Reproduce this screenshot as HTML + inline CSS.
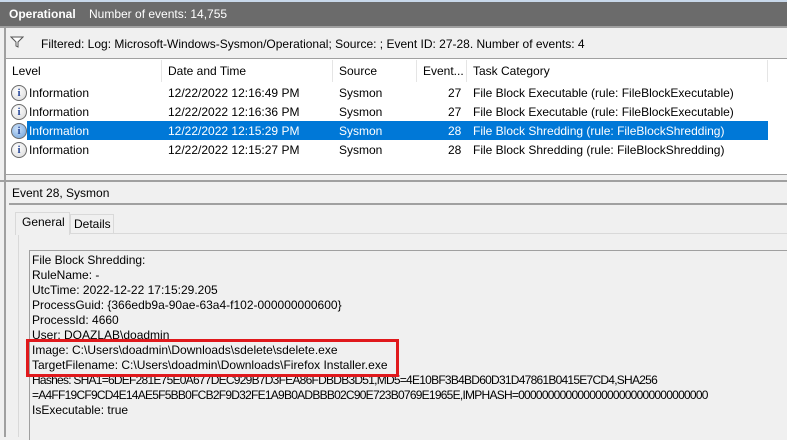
<!DOCTYPE html>
<html><head><style>
*{margin:0;padding:0;box-sizing:border-box}
body{width:787px;height:437px;overflow:hidden;background:#f0f0f0;font-family:"Liberation Sans",sans-serif;font-size:12px;color:#000;position:relative}
.a{position:absolute;white-space:nowrap}
.ic{position:absolute;width:16px;height:16px;border-radius:50%;border:1px solid #6a6a6a;background:radial-gradient(circle at 40% 35%,#fff,#d8d8d8);font:bold 11px "Liberation Serif",serif;color:#2a4a9a;text-align:center;line-height:14px}
.h{letter-spacing:-0.75px}
</style></head><body>
<div class="a" style="left:0;top:0;width:787px;height:2px;background:#c8d8ea"></div>
<div class="a" style="left:0;top:2px;width:787px;height:24px;background:#6b6b6b"></div>
<div class="a" style="left:9px;top:7px;color:#fff;font-weight:bold">Operational</div>
<div class="a" style="left:89px;top:7px;color:#fff">Number of events: 14,755</div>
<div class="a" style="left:0;top:26px;width:787px;height:2px;background:#a0a0a0"></div>
<div class="a" style="left:4px;top:28px;width:2px;height:409px;background:#a0a0a0"></div>
<svg class="a" style="left:10px;top:36px" width="14" height="12"><path d="M1 1H13L8 6V11L6 10V6Z" fill="#fff" stroke="#555"/></svg>
<div class="a" style="left:41px;top:37px">Filtered: Log: Microsoft-Windows-Sysmon/Operational; Source: ; Event ID: 27-28. Number of events: 4</div>
<div class="a" style="left:6px;top:58px;width:781px;height:117px;background:#fff;border-top:1px solid #a0a0a0;border-bottom:1px solid #a0a0a0"></div>
<div class="a" style="left:161px;top:60px;width:1px;height:22px;background:#e5e5e5"></div>
<div class="a" style="left:332px;top:60px;width:1px;height:22px;background:#e5e5e5"></div>
<div class="a" style="left:416px;top:60px;width:1px;height:22px;background:#e5e5e5"></div>
<div class="a" style="left:466px;top:60px;width:1px;height:22px;background:#e5e5e5"></div>
<div class="a" style="left:767px;top:60px;width:1px;height:22px;background:#e5e5e5"></div>
<div class="a" style="left:12px;top:64px">Level</div>
<div class="a" style="left:168px;top:64px">Date and Time</div>
<div class="a" style="left:339px;top:64px">Source</div>
<div class="a" style="left:423px;top:64px">Event...</div>
<div class="a" style="left:473px;top:64px">Task Category</div>
<div class="a" style="left:27px;top:121px;width:741px;height:19px;background:#0078d7"></div>
<div class="ic" style="left:11px;top:85px">i</div>
<div class="ic" style="left:11px;top:104px">i</div>
<div class="ic" style="left:11px;top:123px;background:radial-gradient(circle at 40% 35%,#cfe3fb,#6a9fd8)">i</div>
<div class="ic" style="left:11px;top:142px">i</div>
<div class="a" style="left:29px;top:86px">Information</div><div class="a" style="left:168px;top:86px">12/22/2022 12:16:49 PM</div><div class="a" style="left:339px;top:86px">Sysmon</div><div class="a" style="left:448px;top:86px">27</div><div class="a" style="left:473px;top:86px">File Block Executable (rule: FileBlockExecutable)</div>
<div class="a" style="left:29px;top:105px">Information</div><div class="a" style="left:168px;top:105px">12/22/2022 12:16:36 PM</div><div class="a" style="left:339px;top:105px">Sysmon</div><div class="a" style="left:448px;top:105px">27</div><div class="a" style="left:473px;top:105px">File Block Executable (rule: FileBlockExecutable)</div>
<div style="color:#fff"><div class="a" style="left:29px;top:124px">Information</div><div class="a" style="left:168px;top:124px">12/22/2022 12:15:29 PM</div><div class="a" style="left:339px;top:124px">Sysmon</div><div class="a" style="left:448px;top:124px">28</div><div class="a" style="left:473px;top:124px">File Block Shredding (rule: FileBlockShredding)</div></div>
<div class="a" style="left:29px;top:143px">Information</div><div class="a" style="left:168px;top:143px">12/22/2022 12:15:27 PM</div><div class="a" style="left:339px;top:143px">Sysmon</div><div class="a" style="left:448px;top:143px">28</div><div class="a" style="left:473px;top:143px">File Block Shredding (rule: FileBlockShredding)</div>
<div class="a" style="left:0;top:180px;width:787px;height:2px;background:#a0a0a0"></div>
<div class="a" style="left:12px;top:186px">Event 28, Sysmon</div>
<div class="a" style="left:9px;top:203px;width:778px;height:2px;background:#a0a0a0"></div>
<div class="a" style="left:18px;top:233px;width:769px;height:204px;background:#f0f0f0;border-top:1px solid #d9d9d9;border-left:1px solid #d9d9d9"></div>
<div class="a" style="left:15px;top:212px;width:55px;height:23px;background:#f0f0f0;border:1px solid #d9d9d9;border-bottom:none"></div>
<div class="a" style="left:22px;top:215px">General</div>
<div class="a" style="left:70px;top:214px;width:44px;height:19px;border:1px solid #d9d9d9;border-bottom:none"></div>
<div class="a" style="left:74px;top:217px">Details</div>
<div class="a" style="left:29px;top:250px;width:760px;height:190px;border-top:1px solid #a0a0a0;border-left:1px solid #a0a0a0"></div>
<div class="a" style="left:32px;top:253px;line-height:15px">File Block Shredding:<br>RuleName: -<br>UtcTime: 2022-12-22 17:15:29.205<br>ProcessGuid: {366edb9a-90ae-63a4-f102-000000000600}<br>ProcessId: 4660<br>User: DOAZLAB\doadmin<br>Image: C:\Users\doadmin\Downloads\sdelete\sdelete.exe<br>TargetFilename: C:\Users\doadmin\Downloads\Firefox Installer.exe<br><span class="h">Hashes: SHA1=6DEF281E75E0A677DEC929B7D3FEA86FDBDB3D51,MD5=4E10BF3B4BD60D31D47861B0415E7CD4,SHA256</span><br><span class="h">=A4FF19CF9CD4E14AE5F5BB0FCB2F9D32FE1A9B0ADBBB02C90E723B0769E1965E,IMPHASH=00000000000000000000000000000000</span><br>IsExecutable: true</div>
<div class="a" style="left:26px;top:339px;width:373px;height:38px;border:3px solid #e0191c"></div>
</body></html>
